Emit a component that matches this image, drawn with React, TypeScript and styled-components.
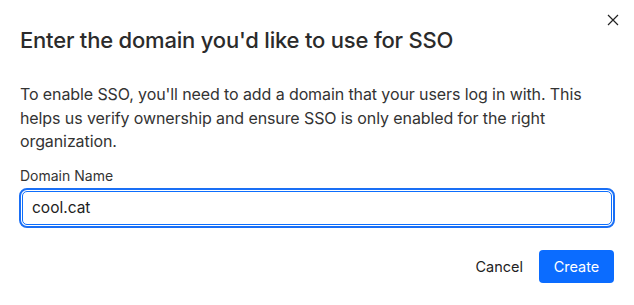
import React from "react";
import styled, { createGlobalStyle } from "styled-components";

const Global = createGlobalStyle`
  html, body { margin: 0; padding: 0; background: #ffffff; }
  body { font-family: Inter, "Noto Sans", sans-serif; -webkit-font-smoothing: antialiased; }
  * { box-sizing: border-box; }
`;

const Dialog = styled.div`
  position: relative;
  width: 634px;
  height: 305px;
  padding: 26px 20px 22px 20px;
  display: flex;
  flex-direction: column;
  background: #fff;
`;

const CloseButton = styled.button`
  position: absolute;
  top: 11px;
  right: 12px;
  width: 18px;
  height: 18px;
  padding: 0;
  border: none;
  background: transparent;
  display: flex;
  align-items: center;
  justify-content: center;
  color: #222;
  cursor: pointer;
`;

const Title = styled.h2`
  margin: 0;
  font-size: 22px;
  line-height: 28px;
  font-weight: 500;
  color: #2b2b2b;
  letter-spacing: -0.2px;
`;

const Body = styled.p`
  margin: 29px 0 0 0;
  font-size: 16px;
  line-height: 23.5px;
  color: #333;
  font-weight: 400;
  letter-spacing: -0.1px;
`;

const Field = styled.div`
  display: flex;
  flex-direction: column;
  gap: 6px;
  margin-top: 13px;
`;

const Label = styled.label`
  font-size: 14px;
  line-height: 18px;
  color: #333;
`;

const Input = styled.input`
  height: 34px;
  margin: 0 2px;
  width: calc(100% - 4px);
  padding: 0 9px;
  font-family: inherit;
  font-size: 15.5px;
  color: #222;
  border: 1px solid #0d6efd;
  border-radius: 5px;
  outline: 2px solid #1a6ff5;
  outline-offset: 1px;
  background: #fff;
`;

const Footer = styled.div`
  margin-top: auto;
  display: flex;
  justify-content: flex-end;
  align-items: center;
  gap: 16px;
`;

const TextButton = styled.button`
  border: none;
  background: transparent;
  font-family: inherit;
  font-size: 14.5px;
  color: #222;
  padding: 0;
  height: 33px;
  cursor: pointer;
`;

const PrimaryButton = styled.button`
  border: none;
  background: #0b6cff;
  color: #fff;
  font-family: inherit;
  font-size: 14.5px;
  height: 33px;
  width: 75px;
  padding: 0;
  border-radius: 4px;
  cursor: pointer;
`;

export default function App() {
  return (
    <>
      <Global />
      <Dialog>
        <CloseButton aria-label="Close">
          <svg width="12" height="12" viewBox="0 0 12 12">
            <path d="M1 1 L11 11 M11 1 L1 11" stroke="#222" strokeWidth="1.2" fill="none" />
          </svg>
        </CloseButton>
        <Title>Enter the domain you'd like to use for SSO</Title>
        <Body>
          To enable SSO, you'll need to add a domain that your users log in with. This helps us
          verify ownership and ensure SSO is only enabled for the right organization.
        </Body>
        <Field>
          <Label>Domain Name</Label>
          <Input defaultValue="cool.cat" />
        </Field>
        <Footer>
          <TextButton>Cancel</TextButton>
          <PrimaryButton>Create</PrimaryButton>
        </Footer>
      </Dialog>
    </>
  );
}
